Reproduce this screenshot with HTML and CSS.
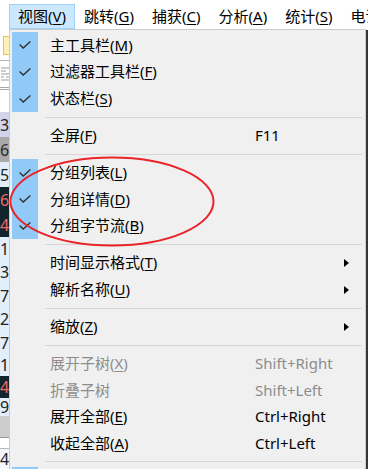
FILE: index.html
```html
<!DOCTYPE html>
<html lang="zh-CN">
<head>
<meta charset="utf-8">
<title>视图菜单</title>
<link rel="stylesheet" href="styles.css">
</head>
<body>
<div class="app">
  <div class="menubar">
    <div class="mb-item active">视图(<u>V</u>)</div>
    <div class="mb-item">跳转(<u>G</u>)</div>
    <div class="mb-item">捕获(<u>C</u>)</div>
    <div class="mb-item">分析(<u>A</u>)</div>
    <div class="mb-item">统计(<u>S</u>)</div>
    <div class="mb-item">电话(<u>Y</u>)</div>
  </div>
  <div class="workspace">
    <div class="pane">
      <div class="toolbar"><span class="tb-icon"></span></div>
      <div class="filterbar">
        <svg class="fb-icon" width="10" height="16" viewBox="0 0 10 16"><path d="M1 2h8M1 5h5M1 8h8M1 11h3M6 11h3M1 14h8" stroke="#9a9a9a" stroke-width="1" fill="none"/></svg>
      </div>
      <div class="plist-header"></div>
      <div class="packets">
        <div class="pr lav h25">3</div>
        <div class="pr grey h25">6</div>
        <div class="pr blue h25">5</div>
        <div class="pr dark h25">6</div>
        <div class="pr dark h25">4</div>
        <div class="pr blue h23">1</div>
        <div class="pr blue h24">3</div>
        <div class="pr blue h23">7</div>
        <div class="pr blue h24">2</div>
        <div class="pr blue h23">7</div>
        <div class="pr blue h22">1</div>
        <div class="pr dark h22">4</div>
        <div class="pr blue h18">9</div>
        <div class="pgrey"></div>
        <div class="plines"></div>
        <div class="pr white h20">4</div>
      </div>
    </div>
    <div class="scroll"></div>
  </div>
</div>

<div class="menu">
  <div class="mi checked"><span class="chk"><svg width="12" height="8" viewBox="0 0 12 8"><polyline points="0.6,3.6 4.2,7.1 11.4,0.6" fill="none" stroke="#333" stroke-width="1.4"/></svg></span><span class="lbl">主工具栏(<u>M</u>)</span></div>
  <div class="mi checked"><span class="chk"><svg width="12" height="8" viewBox="0 0 12 8"><polyline points="0.6,3.6 4.2,7.1 11.4,0.6" fill="none" stroke="#333" stroke-width="1.4"/></svg></span><span class="lbl">过滤器工具栏(<u>F</u>)</span></div>
  <div class="mi checked"><span class="chk"><svg width="12" height="8" viewBox="0 0 12 8"><polyline points="0.6,3.6 4.2,7.1 11.4,0.6" fill="none" stroke="#333" stroke-width="1.4"/></svg></span><span class="lbl">状态栏(<u>S</u>)</span></div>
  <div class="sep"></div>
  <div class="mi"><span class="chk"></span><span class="lbl">全屏(<u>F</u>)</span><span class="sc">F11</span></div>
  <div class="sep"></div>
  <div class="mi checked"><span class="chk"><svg width="12" height="8" viewBox="0 0 12 8"><polyline points="0.6,3.6 4.2,7.1 11.4,0.6" fill="none" stroke="#333" stroke-width="1.4"/></svg></span><span class="lbl">分组列表(<u>L</u>)</span></div>
  <div class="mi checked"><span class="chk"><svg width="12" height="8" viewBox="0 0 12 8"><polyline points="0.6,3.6 4.2,7.1 11.4,0.6" fill="none" stroke="#333" stroke-width="1.4"/></svg></span><span class="lbl">分组详情(<u>D</u>)</span></div>
  <div class="mi checked"><span class="chk"><svg width="12" height="8" viewBox="0 0 12 8"><polyline points="0.6,3.6 4.2,7.1 11.4,0.6" fill="none" stroke="#333" stroke-width="1.4"/></svg></span><span class="lbl">分组字节流(<u>B</u>)</span></div>
  <div class="sep"></div>
  <div class="mi"><span class="chk"></span><span class="lbl">时间显示格式(<u>T</u>)</span><span class="sc"></span><span class="arrow"></span></div>
  <div class="mi"><span class="chk"></span><span class="lbl">解析名称(<u>U</u>)</span><span class="sc"></span><span class="arrow"></span></div>
  <div class="sep"></div>
  <div class="mi"><span class="chk"></span><span class="lbl">缩放(<u>Z</u>)</span><span class="sc"></span><span class="arrow"></span></div>
  <div class="sep"></div>
  <div class="mi disabled"><span class="chk"></span><span class="lbl">展开子树(<u>X</u>)</span><span class="sc">Shift+Right</span></div>
  <div class="mi disabled"><span class="chk"></span><span class="lbl">折叠子树</span><span class="sc">Shift+Left</span></div>
  <div class="mi"><span class="chk"></span><span class="lbl">展开全部(<u>E</u>)</span><span class="sc">Ctrl+Right</span></div>
  <div class="mi"><span class="chk"></span><span class="lbl">收起全部(<u>A</u>)</span><span class="sc">Ctrl+Left</span></div>
  <div class="sep"></div>
  <div class="mi checked"><span class="chk"></span></div>
</div>

<svg class="ring" width="206" height="92" viewBox="0 0 206 92">
  <ellipse cx="103" cy="45.5" rx="101.5" ry="44" fill="none" stroke="#e8242a" stroke-width="2"/>
</svg>
</body>
</html>
```

FILE: styles.css
```css
html, body {
  margin: 0;
  padding: 0;
  width: 368px;
  height: 469px;
  overflow: hidden;
}

body {
  position: relative;
  background: #ffffff;
  color: #000000;
  font-family: "Noto Sans", "Noto Sans CJK SC", sans-serif;
  font-size: 15px;
}

u {
  text-decoration-thickness: 1px;
  text-underline-offset: 2px;
}

/* ---------- application behind the menu ---------- */
.app {
  display: flex;
  flex-direction: column;
  height: 469px;
}

.menubar {
  flex: none;
  height: 30px;
  box-sizing: border-box;
  padding: 4px 0 0 9px;
  display: flex;
  align-items: flex-start;
  background: #ffffff;
  white-space: nowrap;
  overflow: hidden;
}

.mb-item {
  flex: none;
  height: 25px;
  box-sizing: border-box;
  border: 1px solid transparent;
  padding: 0 8px;
  display: flex;
  align-items: center;
  line-height: 1;
}

.mb-item.active {
  background: #cce8ff;
  border-color: #99d1ff;
}

.workspace {
  flex: 1;
  min-height: 0;
  display: flex;
}

.pane {
  flex: 1;
  display: flex;
  flex-direction: column;
  min-width: 0;
}

.scroll {
  flex: none;
  width: 3px;
  background: #363636;
}

.toolbar {
  flex: none;
  height: 30px;
  box-sizing: border-box;
  padding: 6px 0 0 3px;
}

.tb-icon {
  display: block;
  width: 22px;
  height: 19px;
  box-sizing: border-box;
  background: #fff0b5;
  border: 1px solid #e6c35c;
}

.filterbar {
  flex: none;
  height: 30px;
  box-sizing: border-box;
  border-top: 1px solid #b4b4b4;
  border-bottom: 3px double #a8a8a8;
  padding: 5px 0 0 0;
}

.fb-icon {
  display: block;
}

.plist-header {
  flex: none;
  height: 22px;
  background: #ffffff;
}

.packets {
  flex: 1;
  display: flex;
  flex-direction: column;
  overflow: hidden;
}

.pr {
  flex: none;
  font-family: "Noto Sans", sans-serif;
  font-size: 16px;
  color: #222222;
  display: flex;
  align-items: center;
  padding-left: 0;
  line-height: 1;
  overflow: hidden;
}

.pr.blue { background: #e2effb; }
.pr.lav { background: #d3d3ec; }
.pr.grey { background: #a9a9a9; color: #2a2a2a; }
.pr.dark { background: #13252c; color: #ee6b6b; }
.pr.white { background: #f4f8fc; }

.h25 { height: 25px; }
.h24 { height: 24px; }
.h23 { height: 23px; }
.h22 { height: 22px; }
.h20 { height: 20px; }
.h18 { height: 18px; }

.pgrey {
  flex: none;
  height: 21px;
  background: #cdcdcd;
}

.plines {
  flex: none;
  height: 12px;
  box-sizing: border-box;
  border-top: 1px solid #9a9a9a;
  border-bottom: 1px solid #b8b8b8;
  background: #ffffff;
}

/* ---------- dropdown menu ---------- */
.menu {
  position: absolute;
  left: 9px;
  top: 29px;
  width: 357px;
  height: 460px;
  box-sizing: border-box;
  border: 1px solid #cccccc;
  background: #f0f0f0;
  padding: 2px 2px 0 2px;
  overflow: hidden;
}

.mi {
  display: flex;
  align-items: center;
  height: 26.667px;
  white-space: nowrap;
}

.chk {
  flex: none;
  width: 26px;
  align-self: stretch;
  display: flex;
  align-items: center;
  justify-content: center;
}

.mi.checked .chk {
  background: #91c9f7;
}

.chk svg {
  display: block;
}

.lbl {
  flex: none;
  width: 205px;
  margin-left: 12px;
  line-height: 1;
}

.sc {
  flex: 1;
  line-height: 1;
}

.arrow {
  flex: none;
  width: 0;
  height: 0;
  border-left: 5px solid #000000;
  border-top: 4px solid transparent;
  border-bottom: 4px solid transparent;
  margin-right: 14px;
}

.mi.disabled {
  color: #8d8d8d;
}

.sep {
  height: 10.333px;
  display: flex;
  align-items: center;
  padding: 0 1px 0 33px;
}

.sep::before {
  content: "";
  flex: 1;
  height: 1px;
  background: #d5d5d5;
}

/* ---------- annotation ring ---------- */
.ring {
  position: absolute;
  left: 9px;
  top: 156px;
  pointer-events: none;
}
```
